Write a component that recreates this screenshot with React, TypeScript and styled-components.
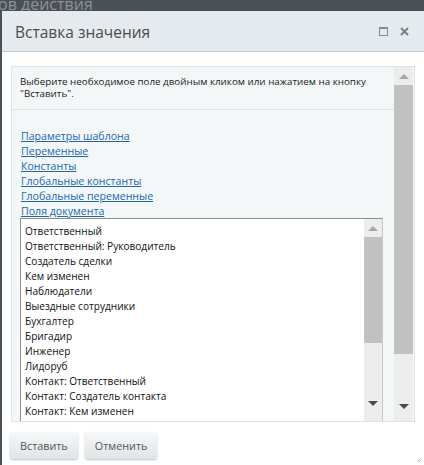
import styled, { createGlobalStyle } from 'styled-components'

const Global = createGlobalStyle`
  html, body {
    margin: 0;
    padding: 0;
    background: #4b5057;
    font-family: "Open Sans", "Liberation Sans", sans-serif;
  }
`

const Page = styled.div`
  width: 424px;
  height: 465px;
  overflow: hidden;
  position: relative;
  display: flex;
  flex-direction: column;
`

const BackTitle = styled.div`
  height: 11px;
  overflow: hidden;
  color: #8d9298;
  font-size: 16px;
  line-height: 8px;
  margin-left: -2px;
  white-space: nowrap;
`

const Dialog = styled.div`
  flex: 1;
  margin-left: 2px;
  background: #fff;
  display: flex;
  flex-direction: column;
  position: relative;
`

const Header = styled.div`
  height: 40px;
  background: #e4eaed;
  border-bottom: 1px solid #c4ccd1;
  display: flex;
  align-items: center;
  padding: 0 14px 0 13px;
`

const Title = styled.div`
  flex: 1;
  font-size: 15.5px;
  color: #4c4c4c;
  padding-top: 2px;
`

const HeadIcon = styled.span`
  display: flex;
  width: 12px;
  margin-left: 9px;
  justify-content: center;
`

const Body = styled.div`
  padding: 14px 9px 0 9px;
`

const Panel = styled.div`
  height: 354px;
  border: 1px solid #dfe4e7;
  background: #f4f7f8;
  display: flex;
  overflow: hidden;
`

const Content = styled.div`
  flex: 1;
  overflow: hidden;
`

const Hint = styled.div`
  font-size: 9.8px;
  line-height: 12px;
  color: #222;
  padding: 9px 8px 9px 8px;
  border-bottom: 1px solid #e1e6e9;
  white-space: nowrap;
`

const Links = styled.div`
  display: flex;
  flex-direction: column;
  padding: 19px 0 0 9px;
`

const Link = styled.a`
  font-size: 10.6px;
  line-height: 15px;
  color: #2068b2;
  text-decoration: underline;
  cursor: pointer;
`

const ListBox = styled.div`
  margin: -1px 0 0 8px;
  width: 361px;
  height: 220px;
  background: #fff;
  border: 1px solid #c8c8c8;
  border-top-color: #8e8e8e;
  border-left-color: #8e8e8e;
  display: flex;
`

const Items = styled.div`
  flex: 1;
  padding: 5px 0 0 4px;
  display: flex;
  flex-direction: column;
`

const Item = styled.div`
  font-size: 10.1px;
  line-height: 15px;
  color: #111;
  white-space: nowrap;
`

const ScrollBar = styled.div<{ $wide?: boolean }>`
  width: ${(p) => (p.$wide ? '19px' : '18px')};
  background: #ededed;
  display: flex;
  flex-direction: column;
  align-items: center;
  flex-shrink: 0;
  margin-right: ${(p) => (p.$wide ? '1px' : '0')};
`

const Arrow = styled.div<{ $down?: boolean }>`
  height: 18px;
  display: flex;
  align-items: center;
  justify-content: center;
  &::after {
    content: '';
    border-left: 5px solid transparent;
    border-right: 5px solid transparent;
    ${(p) =>
      p.$down
        ? 'border-top: 5px solid #4a4a4a;'
        : 'border-bottom: 5px solid #a6a6a6;'}
  }
`

const Thumb = styled.div<{ $h: number; $after: number }>`
  width: 100%;
  height: ${(p) => p.$h}px;
  background: #c1c1c1;
  margin-bottom: ${(p) => p.$after}px;
`

const Footer = styled.div`
  display: flex;
  gap: 7px;
  padding: 10px 0 0 8px;
`

const Button = styled.button`
  height: 27px;
  padding: 0 10px;
  border: none;
  border-radius: 3px;
  background: linear-gradient(#f6f8f9, #dfe4e7);
  box-shadow: 0 1px 2px rgba(0, 0, 0, 0.25);
  font-family: "Open Sans", "Liberation Sans", sans-serif;
  font-size: 10.8px;
  color: #555;
  cursor: pointer;
`

const Grip = styled.svg`
  position: absolute;
  right: 2px;
  bottom: 2px;
`

const links = [
  'Параметры шаблона',
  'Переменные',
  'Константы',
  'Глобальные константы',
  'Глобальные переменные',
  'Поля документа',
]

const items = [
  'Ответственный',
  'Ответственный: Руководитель',
  'Создатель сделки',
  'Кем изменен',
  'Наблюдатели',
  'Выездные сотрудники',
  'Бухгалтер',
  'Бригадир',
  'Инженер',
  'Лидоруб',
  'Контакт: Ответственный',
  'Контакт: Создатель контакта',
  'Контакт: Кем изменен',
]

export default function App() {
  return (
    <Page>
      <Global />
      <BackTitle>ов действия</BackTitle>
      <Dialog>
        <Header>
          <Title>Вставка значения</Title>
          <HeadIcon>
            <svg width="9" height="9" viewBox="0 0 9 9">
              <rect x="0.5" y="0.5" width="8" height="8" fill="none" stroke="#8a8a8a" />
              <line x1="0" y1="1.5" x2="9" y2="1.5" stroke="#8a8a8a" />
            </svg>
          </HeadIcon>
          <HeadIcon>
            <svg width="9" height="9" viewBox="0 0 9 9">
              <path d="M1 1 L8 8 M8 1 L1 8" stroke="#7a7a7a" strokeWidth="1.8" />
            </svg>
          </HeadIcon>
        </Header>
        <Body>
          <Panel>
            <Content>
              <Hint>
                Выберите необходимое поле двойным кликом или нажатием на кнопку
                <br />
                "Вставить".
              </Hint>
              <Links>
                {links.map((l) => (
                  <Link key={l}>{l}</Link>
                ))}
              </Links>
              <ListBox>
                <Items>
                  {items.map((i) => (
                    <Item key={i}>{i}</Item>
                  ))}
                </Items>
                <ScrollBar>
                  <Arrow />
                  <Thumb $h={106} $after={51} />
                  <Arrow $down />
                </ScrollBar>
              </ListBox>
            </Content>
            <ScrollBar $wide>
              <Arrow />
              <Thumb $h={269} $after={43} />
              <Arrow $down />
            </ScrollBar>
          </Panel>
        </Body>
        <Footer>
          <Button>Вставить</Button>
          <Button>Отменить</Button>
        </Footer>
        <Grip width="6" height="6" viewBox="0 0 6 6">
          <path d="M5 1 L1 5 M5 3 L3 5" stroke="#bbb" strokeWidth="1" />
        </Grip>
      </Dialog>
    </Page>
  )
}
